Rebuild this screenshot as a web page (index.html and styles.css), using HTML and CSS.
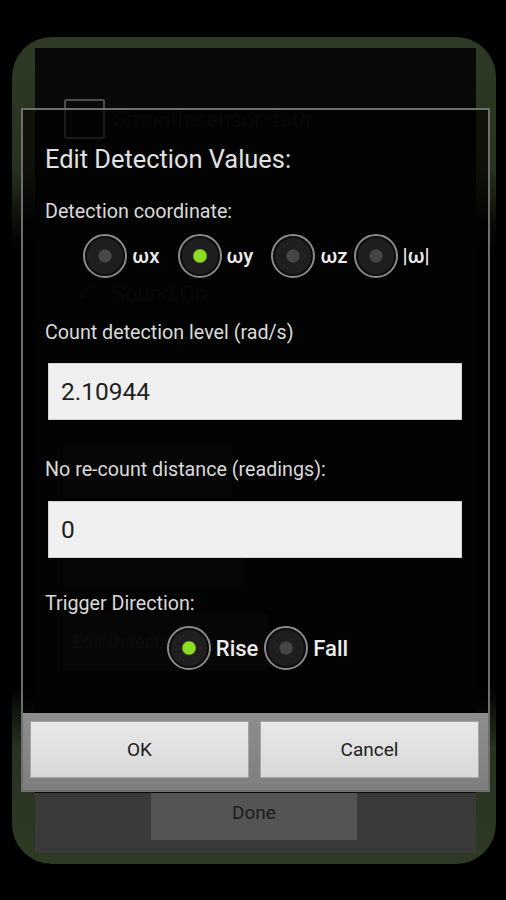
FILE: index.html
```html
<!DOCTYPE html>
<html lang="en">
<head>
    <meta charset="UTF-8">
    <meta name="viewport" content="width=device-width, initial-scale=1.0">
    <title>Edit Detection Values</title>
    <link rel="stylesheet" href="styles.css">
</head>
<body>

<div class="frame">
    <div class="screen">
        <div class="ghost-row">
            <span class="ghost-box"></span>
            <span class="ghost-text">Smooth sensor data</span>
        </div>
        <div class="ghost-row ghost-sound">
            <span class="ghost-tick">&#10003;</span>
            <span class="ghost-text">Sound On</span>
        </div>
        <div class="ghost-btn ghost-btn-1"></div>
        <div class="ghost-btn ghost-btn-2"></div>
        <div class="ghost-btn ghost-btn-3">Edit Detection</div>
        <div class="bottom-bar">
            <div class="done-btn">Done</div>
        </div>
    </div>
</div>

<div class="dialog">
    <h1 class="dialog-title">Edit Detection Values:</h1>

    <div class="label label-first">Detection coordinate:</div>
    <div class="radio-row">
        <div class="option"><span class="radio"></span><span class="option-text">ωx</span></div>
        <div class="option"><span class="radio checked"></span><span class="option-text">ωy</span></div>
        <div class="option"><span class="radio"></span><span class="option-text">ωz</span></div>
        <div class="option option-tight"><span class="radio"></span><span class="option-text">|ω|</span></div>
    </div>

    <div class="label label-count">Count detection level (rad/s)</div>
    <div class="field">2.10944</div>

    <div class="label label-gap">No re-count distance (readings):</div>
    <div class="field">0</div>

    <div class="label label-trigger">Trigger Direction:</div>
    <div class="radio-row direction-row">
        <div class="option"><span class="radio checked"></span><span class="option-text big">Rise</span></div>
        <div class="option option-tight"><span class="radio"></span><span class="option-text big">Fall</span></div>
    </div>

    <div class="button-bar">
        <div class="dlg-btn">OK</div>
        <div class="dlg-btn">Cancel</div>
    </div>
</div>

</body>
</html>
```

FILE: styles.css
```css
body {
    font-family: 'Roboto', 'Liberation Sans', sans-serif;
    background-color: #000000;
    margin: 0;
    padding: 0;
    width: 506px;
    height: 900px;
    overflow: hidden;
    position: relative;
}
.frame {
    margin: 37px 10px 0 12px;
    height: 827px;
    box-sizing: border-box;
    padding: 11px 20px 11px 23px;
    border-radius: 40px;
    background-color: #000000;
    background-image: linear-gradient(to bottom, #2e3a26 0px, #28331f 130px, #0a0d08 185px, #000000 215px, #000000 650px, #0a0d08 665px, #27321f 710px, #2e3a26 827px);
}
.screen {
    height: 100%;
    background-color: #090909;
    display: flex;
    flex-direction: column;
}

/* faded activity behind the dialog */
.ghost-row {
    display: flex;
    align-items: center;
    margin-top: 49px;
    padding-left: 29px;
    height: 44px;
}
.ghost-box {
    width: 41px;
    height: 40px;
    box-sizing: border-box;
    border: 2px solid #4c4c4c;
    border-radius: 2px;
}
.ghost-text {
    margin-left: 8px;
    font-size: 22px;
    color: #161616;
}
.ghost-sound {
    margin-top: 130px;
    padding-left: 40px;
}
.ghost-tick {
    width: 37px;
    font-size: 24px;
    color: #161616;
}
.ghost-sound .ghost-text {
    margin-left: 0;
}
.ghost-btn {
    margin-left: 28px;
    background-color: #161616;
    color: #222222;
    font-size: 18px;
    box-sizing: border-box;
    padding: 16px 10px;
}
.ghost-btn-1 {
    margin-top: 132px;
    width: 169px;
    height: 50px;
}
.ghost-btn-2 {
    margin-top: 56px;
    width: 180px;
    height: 32px;
}
.ghost-btn-3 {
    margin-top: 30px;
    width: 205px;
    height: 55px;
    white-space: nowrap;
    overflow: hidden;
}
.bottom-bar {
    margin-top: auto;
    height: 60px;
    background-color: #3a3a3a;
    display: flex;
    justify-content: center;
}
.done-btn {
    width: 206px;
    height: 47px;
    margin-right: 3px;
    box-sizing: border-box;
    padding-bottom: 8px;
    background-color: #545454;
    color: #1c1c1c;
    font-size: 19px;
    display: flex;
    align-items: center;
    justify-content: center;
}

/* dialog */
.dialog {
    position: absolute;
    left: 21px;
    top: 108px;
    width: 469px;
    height: 684px;
    box-sizing: border-box;
    border: 2px solid #6e6e6e;
    background-color: rgba(0, 0, 0, 0.65);
    display: flex;
    flex-direction: column;
}
.dialog-title {
    margin: 34px 0 0 22px;
    font-size: 25.4px;
    line-height: 30px;
    font-weight: normal;
    color: #e2e2e2;
}
.label {
    margin-left: 22px;
    font-size: 19.7px;
    line-height: 22px;
    color: #dadada;
}
.label-first {
    margin-top: 27px;
}
.label-count {
    margin-top: 44px;
}
.label-gap {
    margin-top: 39px;
}
.label-trigger {
    margin-top: 35px;
}
.radio-row {
    display: flex;
    justify-content: center;
    align-items: center;
    gap: 18px;
    margin-top: 11px;
    height: 44px;
    padding-left: 2px;
}
.direction-row {
    padding-left: 4px;
}
.option {
    display: flex;
    align-items: center;
}
.option-tight {
    margin-left: -12px;
}
.radio {
    width: 44px;
    height: 44px;
    box-sizing: border-box;
    border-radius: 50%;
    border: 2px solid #8a8a8a;
    background: radial-gradient(circle, #474747 0, #474747 6px, #1f1f1f 7px, #1f1f1f 17px, #0c0c0c 19px);
}
.radio.checked {
    background: radial-gradient(circle, #8fdc24 0, #8fdc24 6px, #1f1f1f 7.5px, #1f1f1f 17px, #0c0c0c 19px);
}
.option-text {
    margin-left: 5px;
    font-size: 20.5px;
    font-weight: 500;
    color: #ececec;
}
.option-text.big {
    font-size: 22px;
}
.field {
    margin: 19px 26px 0 25px;
    height: 57px;
    box-sizing: border-box;
    padding-left: 12px;
    background-color: #f0f0f0;
    border: 1px solid #d2d2d2;
    color: #1f1f1f;
    font-size: 24.5px;
    display: flex;
    align-items: center;
}
.label-gap + .field {
    margin-top: 20px;
}
.button-bar {
    margin-top: auto;
    height: 77px;
    box-sizing: border-box;
    padding: 8px 9px 0 7px;
    background: linear-gradient(to bottom, #8e8e8e, #7e7e7e);
    display: grid;
    grid-template-columns: 1fr 1fr;
    column-gap: 11px;
    align-items: start;
}
.dlg-btn {
    height: 57px;
    background: linear-gradient(to bottom, #e8e8e8, #d8d8d8);
    border: 1px solid #a4a4a4;
    box-sizing: border-box;
    color: #202020;
    font-size: 19px;
    display: flex;
    align-items: center;
    justify-content: center;
}
```
